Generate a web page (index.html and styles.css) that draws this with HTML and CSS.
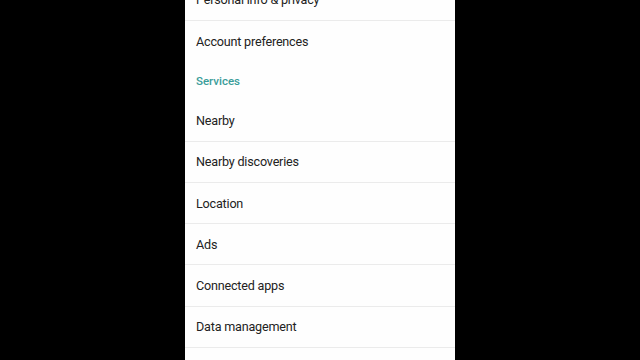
FILE: index.html
```html
<!DOCTYPE html>
<html lang="en">
<head>
  <meta charset="UTF-8" />
  <meta name="viewport" content="width=device-width, initial-scale=1.0"/>
  <title>Settings</title>
  <link rel="stylesheet" href="styles.css">
</head>
<body>

  <div class="screen">
    <ul class="settings">
      <li class="item">Personal info &amp; privacy</li>
      <li class="item no-line">Account preferences</li>
      <li class="section">Services</li>
      <li class="item">Nearby</li>
      <li class="item">Nearby discoveries</li>
      <li class="item">Location</li>
      <li class="item">Ads</li>
      <li class="item">Connected apps</li>
      <li class="item">Data management</li>
      <li class="item"></li>
    </ul>
  </div>

</body>
</html>
```

FILE: styles.css
```css
html, body {
  margin: 0;
  height: 100%;
  overflow: hidden;
}

body {
  background: #000;
  display: flex;
  justify-content: center;
  font-family: Roboto, "Liberation Sans", Arial, sans-serif;
}

.screen {
  width: 270px;
  height: 100%;
  background: #fefefe;
  overflow: hidden;
}

.settings {
  list-style: none;
  margin: -20.6px 0 0;
  padding: 0;
}

.item {
  box-sizing: border-box;
  height: 41.2px;
  display: flex;
  align-items: center;
  padding: 0 11px;
  font-size: 12.6px;
  letter-spacing: -0.2px;
  color: #222;
  border-bottom: 1px solid #ebebeb;
}

.item.no-line {
  border-bottom: none;
}

.section {
  height: 38.8px;
  display: flex;
  align-items: center;
  padding: 0 11px;
  font-size: 11.5px;
  font-weight: 500;
  color: #3a9d9a;
}
```
